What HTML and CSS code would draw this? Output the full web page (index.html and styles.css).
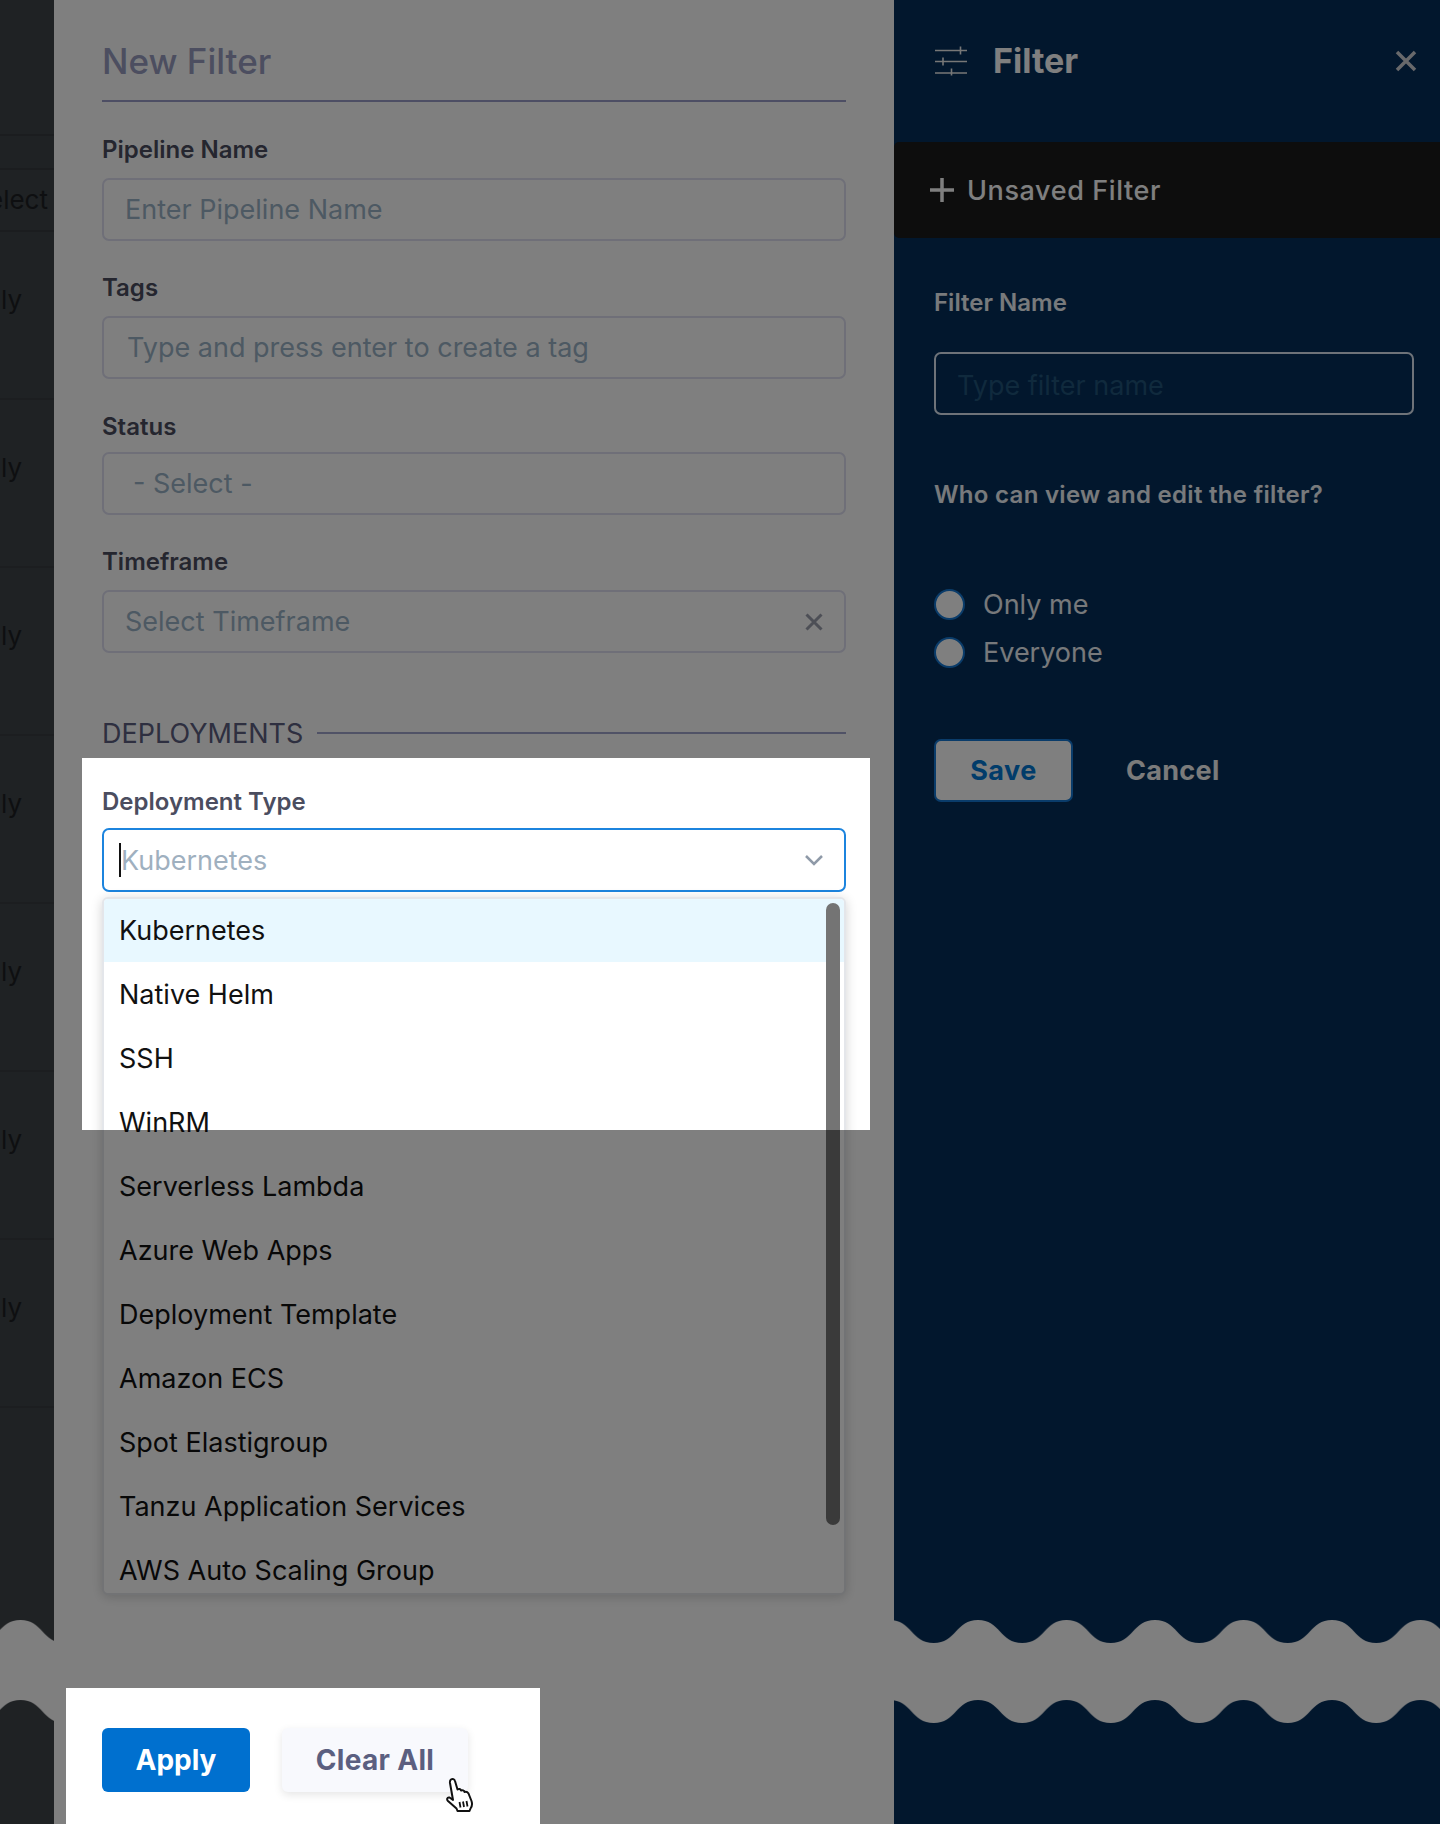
FILE: index.html
```html
<!DOCTYPE html>
<html lang="en">
<head>
<meta charset="utf-8">
<title>New Filter</title>
<link rel="stylesheet" href="styles.css">
</head>
<body>
<div class="app">
  <div class="backdrop">
    <div class="bd-head"></div>
    <div class="bd-sub"></div>
    <div class="bd-select">elect</div>
    <div class="bd-row">ly</div>
    <div class="bd-row">ly</div>
    <div class="bd-row">ly</div>
    <div class="bd-row">ly</div>
    <div class="bd-row">ly</div>
    <div class="bd-row">ly</div>
    <div class="bd-row">ly</div>
    <svg class="tear tear-left" width="54" height="104" aria-hidden="true">
      <defs>
        <pattern id="waveL" width="88.5" height="104" patternUnits="userSpaceOnUse" patternTransform="translate(20.5 0)">
          <path d="M0 0C22 0 22 23 44.25 23C66.5 23 66.5 0 88.5 0V80C66.5 80 66.5 103 44.25 103C22 103 22 80 0 80Z" fill="#fff"/>
        </pattern>
      </defs>
      <rect width="54" height="104" fill="url(#waveL)"/>
    </svg>
  </div>

  <main class="panel">
    <h1 class="title">New Filter</h1>
    <div class="field first">
      <div class="label">Pipeline Name</div>
      <div class="input"><span class="ph">Enter Pipeline Name</span></div>
    </div>
    <div class="field">
      <div class="label">Tags</div>
      <div class="input input-tags"><span class="ph">Type and press enter to create a tag</span></div>
    </div>
    <div class="field field-status">
      <div class="label">Status</div>
      <div class="input input-status"><span class="ph">- Select -</span></div>
    </div>
    <div class="field">
      <div class="label">Timeframe</div>
      <div class="input input-between">
        <span class="ph">Select Timeframe</span>
        <svg class="clear-x" width="20" height="20" viewBox="0 0 20 20" aria-hidden="true"><path d="M2.5 2.5L17.5 17.5M17.5 2.5L2.5 17.5"/></svg>
      </div>
    </div>
    <div class="section">
      <span class="section-name">DEPLOYMENTS</span>
      <span class="section-line"></span>
    </div>
    <div class="field field-deploy">
      <div class="label">Deployment Type</div>
      <div class="input input-focus input-between">
        <span class="caret"></span>
        <span class="ph ph-light">Kubernetes</span>
        <svg class="chev" width="20" height="12" viewBox="0 0 20 12" aria-hidden="true"><path d="M2 2L10 10L18 2"/></svg>
      </div>
      <div class="menu">
        <div class="item active">Kubernetes</div>
        <div class="item">Native Helm</div>
        <div class="item">SSH</div>
        <div class="item">WinRM</div>
        <div class="item">Serverless Lambda</div>
        <div class="item">Azure Web Apps</div>
        <div class="item">Deployment Template</div>
        <div class="item">Amazon ECS</div>
        <div class="item">Spot Elastigroup</div>
        <div class="item">Tanzu Application Services</div>
        <div class="item">AWS Auto Scaling Group</div>
        <div class="thumb"></div>
      </div>
    </div>
    <div class="footer">
      <button class="btn btn-apply">Apply</button>
      <button class="btn btn-clear">Clear All</button>
    </div>
  </main>

  <aside class="side">
    <header class="side-head">
      <svg class="sliders" width="32" height="30" viewBox="0 0 32 30" aria-hidden="true">
        <path d="M0 4.5H32M0 15.5H32M0 27H32"/>
        <path d="M25.500 0.500V8.500M8 11.500V19.500M16.500 22.500V29.500"/>
      </svg>
      <div class="side-title">Filter</div>
      <svg class="side-close" width="22" height="22" viewBox="0 0 22 22" aria-hidden="true"><path d="M2 2L20 20M20 2L2 20"/></svg>
    </header>
    <div class="band">
      <svg class="plus" width="24" height="24" viewBox="0 0 24 24" aria-hidden="true"><path d="M12 0V24M0 12H24"/></svg>
      <span>Unsaved Filter</span>
    </div>
    <div class="side-form">
      <div class="side-label">Filter Name</div>
      <div class="side-input">Type filter name</div>
      <div class="side-label who">Who can view and edit the filter?</div>
      <div class="radios">
        <div class="radio"><span class="dot"></span>Only me</div>
        <div class="radio"><span class="dot"></span>Everyone</div>
      </div>
      <div class="side-actions">
        <button class="btn-save">Save</button>
        <span class="cancel">Cancel</span>
      </div>
    </div>
    <svg class="tear tear-right" width="546" height="104" aria-hidden="true">
      <defs>
        <pattern id="waveR" width="88.5" height="104" patternUnits="userSpaceOnUse" patternTransform="translate(-4.5 0)">
          <path d="M0 0C22 0 22 23 44.25 23C66.500 23 66.500 0 88.500 0V80C66.500 80 66.500 103 44.25 103C22 103 22 80 0 80Z" fill="#fff"/>
        </pattern>
      </defs>
      <rect width="546" height="104" fill="url(#waveR)"/>
    </svg>
  </aside>

  <div class="dim"></div>
  <svg class="hand" width="32" height="36" viewBox="0 0 32 36" aria-hidden="true">
    <path d="M7 2.500C8.500 1.500 10.500 2 11 4L13.500 12.500C15 11.500 16.500 12 17 13.500C18.500 12.800 20 13.200 20.500 15C22 14.500 23.500 15 24.500 16.500L27.500 24C28.500 27 28 29.500 26.500 31.500L25.500 34H13.500L12.500 31.500L4 24C2.500 22.500 3 20 5.500 20.500L9 23L6 6C5.800 4.500 6 3.200 7 2.500Z"/>
    <path class="hand-line" d="M15.500 25L16.500 30.500M19 24.500L20 30M22.500 24L23.500 29.500"/>
  </svg>
</div>
</body>
</html>
```
FILE: styles.css
```css
* { box-sizing: border-box; }
html, body { margin: 0; padding: 0; }
body { font-family: Inter, "Liberation Sans", sans-serif; background: #fff; }
.app { position: relative; display: flex; width: 1440px; height: 1824px; overflow: hidden; }

/* backdrop strip */
.backdrop { position: relative; width: 54px; flex: none; background: #3e4448; overflow: hidden; color: #1c1f22; font-size: 26px; }
.bd-head { height: 136px; border-bottom: 2px solid #363b3f; }
.bd-sub { height: 34px; border-bottom: 2px solid #363b3f; }
.bd-select { height: 62px; border-bottom: 2px solid #363b3f; line-height: 60px; margin-left: -12px; white-space: nowrap; }
.bd-row { height: 168px; padding-top: 52px; border-bottom: 2px solid #383d41; padding-left: 1px; margin-top: 0; line-height: 32px; }
.bd-row:first-of-type { margin-top: 0; }
.tear { position: absolute; top: 1620px; left: 0; }

/* main panel */
.panel { position: relative; width: 840px; flex: none; padding: 0 48px; display: flex; flex-direction: column; background: #fff; }
.title { margin: 0; height: 102px; padding-top: 40px; line-height: 42px; font-size: 35px; font-weight: 500; color: #989cc0; border-bottom: 2px solid #9a9cc8; }
.field { margin-top: 32px; position: relative; }
.field.first { margin-top: 33px; }
.field-status { margin-top: 33px; }
.label { height: 30px; line-height: 30px; font-size: 24px; font-weight: 600; color: #4b4d5f; margin-bottom: 13px; }
.field-status .label { margin-bottom: 10px; }
.field-deploy { margin-top: 39px; }
.field-deploy .label { margin-bottom: 11px; }
.input { height: 63px; border: 2px solid #dedff0; border-radius: 7px; padding: 0 21px; display: flex; align-items: center; font-size: 27px; position: relative; }
.ph { color: #9ab2c6; white-space: nowrap; }
.input-tags { padding-left: 23px; }
.input-status { padding-left: 29px; }
.input-between { justify-content: space-between; padding-right: 20px; }
.clear-x path { stroke: #9a9eac; stroke-width: 3; fill: none; }
.section { margin-top: 65px; display: flex; align-items: center; gap: 14px; height: 30px; }
.section-name { font-size: 27px; color: #5c5e80; white-space: nowrap; }
.section-line { flex: 1; height: 2px; background: #a0a4cc; }
.input-focus { height: 64px; border-color: #1c84de; padding-left: 17px; }
.caret { position: absolute; left: 15px; top: 13px; width: 2px; height: 34px; background: #111; }
.ph-light { color: #9fb0bf; }
.chev path { stroke: #8f9aa8; stroke-width: 2.500; fill: none; }

.menu { position: absolute; left: 0; right: 0; top: 110px; height: 698px; background: #fff; border: 2px solid #e4e6ea; border-radius: 6px; overflow: hidden; box-shadow: 0 2px 12px rgba(0,0,0,.18); }
.item { height: 64px; line-height: 64px; padding-left: 15px; font-size: 27px; color: #111; white-space: nowrap; }
.item.active { background: #e8f8ff; height: 63px; margin-bottom: 1px; }
.thumb { position: absolute; right: 4px; top: 4px; width: 14px; height: 622px; border-radius: 7px; background: #747474; }

.footer { margin-top: auto; padding-bottom: 32px; display: flex; gap: 32px; }
.btn { height: 64px; border: 0; border-radius: 6px; font-family: inherit; font-size: 28px; font-weight: 700; }
.btn-apply { width: 148px; background: #0070cf; color: #fff; }
.btn-clear { width: 186px; background: #f8f9fd; color: #5b5f80; box-shadow: 0 3px 8px rgba(0,0,0,.1); letter-spacing: .3px; }

/* right panel */
.side { position: relative; width: 546px; flex: none; background: #042e5a; color: #fff; }
.side-head { height: 142px; padding: 0 23px 20px 41px; display: flex; align-items: center; }
.sliders path { stroke: #eee; stroke-width: 1.6; fill: none; }
.side-title { margin-left: 26px; font-size: 34px; font-weight: 700; line-height: 42px; flex: 1; }
.side-close path { stroke: #d0d2d6; stroke-width: 3.500; fill: none; }
.band { height: 96px; background: #1a1a1a; border-radius: 5px 0 0 5px; padding-left: 36px; display: flex; align-items: center; gap: 13px; font-size: 27px; font-weight: 500; letter-spacing: .6px; }
.plus path { stroke: #fff; stroke-width: 3.500; fill: none; }
.side-form { padding: 50px 26px 0 40px; }
.side-label { height: 30px; line-height: 30px; font-size: 24px; font-weight: 600; color: #f0f4f8; }
.side-input { margin-top: 34px; height: 63px; border: 2px solid #dde6f2; border-radius: 7px; padding-left: 21px; line-height: 64px; font-size: 27px; color: #20547a; }
.who { margin-top: 65px; letter-spacing: .3px; white-space: nowrap; }
.radios { margin-top: 79px; display: flex; flex-direction: column; gap: 18px; }
.radio { height: 30px; display: flex; align-items: center; gap: 18px; font-size: 27px; color: #eef2f6; }
.dot { width: 31px; height: 31px; border-radius: 50%; background: #fff; border: 2px solid #1478d4; }
.side-actions { margin-top: 72px; display: flex; align-items: center; gap: 53px; }
.btn-save { width: 139px; height: 63px; border: 2px solid #1478d4; border-radius: 7px; background: #fff; color: #0278d5; font-family: inherit; font-size: 27px; font-weight: 700; letter-spacing: .5px; }
.cancel { font-size: 27px; font-weight: 700; color: #f6f6f6; letter-spacing: .3px; }

/* dim layer with spotlight holes */
.dim {
  position: absolute; inset: 0; background: rgba(0,0,0,.5);
  clip-path: polygon(evenodd, 0 0, 1440px 0, 1440px 1824px, 0 1824px, 0 0,
    82px 758px, 870px 758px, 870px 1130px, 82px 1130px, 82px 758px, 0 0,
    66px 1688px, 540px 1688px, 540px 1824px, 66px 1824px, 66px 1688px, 0 0);
}
.hand { position: absolute; left: 444px; top: 1777px; }
.hand path { fill: #fff; stroke: #111; stroke-width: 2; stroke-linejoin: round; }
.hand .hand-line { fill: none; stroke-width: 1.8; }
```
